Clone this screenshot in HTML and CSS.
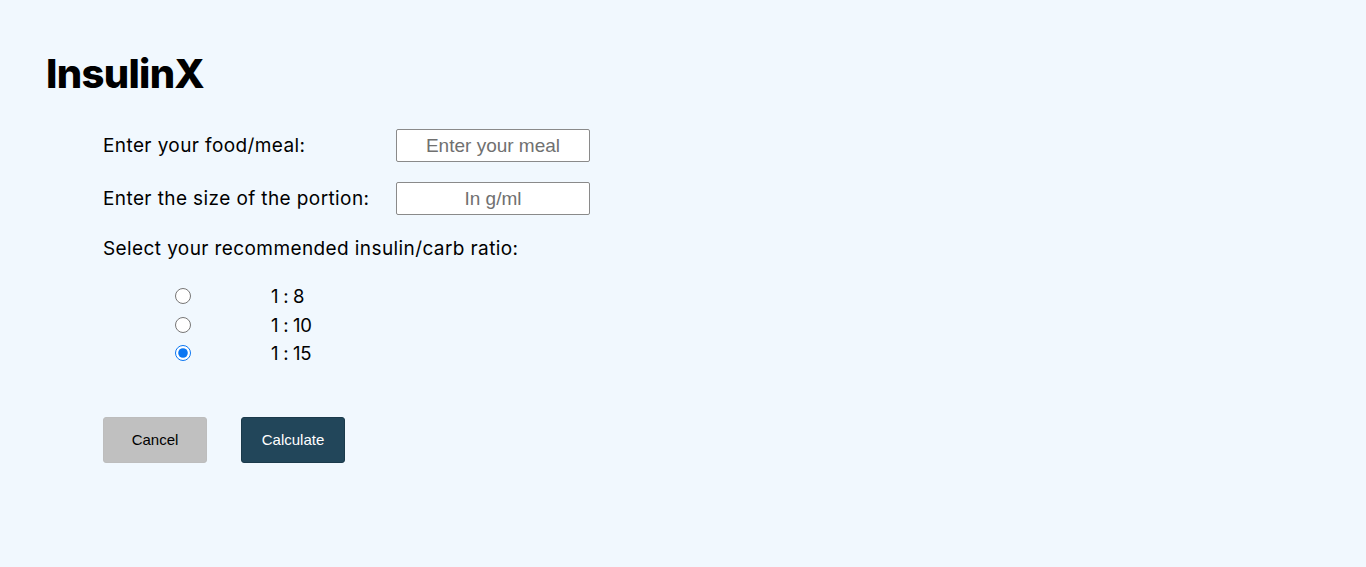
FILE: index.html
```html
<!DOCTYPE html>
<html>
<head>
<meta charset="utf-8">
<link rel="stylesheet" href="styles.css">
</head>
<body>
<div class="page">
  <h1 class="title">InsulinX</h1>
  <form class="form">
    <div class="field">
      <label class="label" for="meal">Enter your food/meal:</label>
      <input class="input" id="meal" type="text" placeholder="Enter your meal">
    </div>
    <div class="field">
      <label class="label" for="size">Enter the size of the portion:</label>
      <input class="input" id="size" type="text" placeholder="In g/ml">
    </div>
    <p class="question">Select your recommended insulin/carb ratio:</p>
    <div class="ratios">
      <label class="ratio"><input type="radio" name="ratio" class="radio"><span>1 : 8</span></label>
      <label class="ratio"><input type="radio" name="ratio" class="radio"><span>1 : 10</span></label>
      <label class="ratio"><input type="radio" name="ratio" class="radio" checked><span>1 : 15</span></label>
    </div>
    <div class="actions">
      <button type="button" class="btn btn-cancel">Cancel</button>
      <button type="button" class="btn btn-calc">Calculate</button>
    </div>
  </form>
</div>
</body>
</html>
```

FILE: styles.css
```css
html, body {
  margin: 0;
  padding: 0;
  background: #f1f8fe;
  height: 100%;
}
body {
  font-family: "Inter", "Open Sans", sans-serif;
  color: #000;
}
.page {
  padding: 48px 0 0 46px;
}
.title {
  margin: 0;
  font-size: 40px;
  font-weight: 800;
  line-height: 52px;
  letter-spacing: -0.7px;
}
.form {
  margin: 29px 0 0 57px;
  display: flex;
  flex-direction: column;
}
.field {
  display: grid;
  grid-template-columns: 293px 194px;
  align-items: center;
  height: 33px;
  margin-bottom: 20px;
}
.label, .question {
  font-size: 19px;
  letter-spacing: 0.4px;
}
.ratio span {
  font-size: 18.5px;
  letter-spacing: -0.3px;
}
.input {
  box-sizing: border-box;
  width: 194px;
  height: 33px;
  border: 1px solid #8a8a8a;
  border-radius: 2px;
  background: #fff;
  font-family: "Liberation Sans", Arial, sans-serif;
  font-size: 19px;
  text-align: center;
  padding: 0;
}
.input::placeholder {
  color: #707070;
}
.question {
  margin: 1px 0 0 0;
  line-height: 26px;
}
.ratios {
  display: flex;
  flex-direction: column;
  margin: 20px 0 0 72px;
}
.ratio {
  display: flex;
  align-items: center;
  height: 28.5px;
}
.radio {
  margin: 0;
  width: 16px;
  height: 16px;
  accent-color: #0a76f2;
}
.ratio span {
  margin-left: 80px;
}
.actions {
  display: flex;
  gap: 34px;
  margin-top: 49px;
}
.btn {
  width: 104px;
  height: 46px;
  border: 1px solid transparent;
  border-radius: 3px;
  font-family: "Liberation Sans", Arial, sans-serif;
  font-size: 15px;
  cursor: pointer;
}
.btn-cancel {
  background: #c0c0c0;
  border-color: #bdbdbd;
  color: #000;
}
.btn-calc {
  background: #22465a;
  border-color: #1b3a4b;
  color: #fff;
}
```
